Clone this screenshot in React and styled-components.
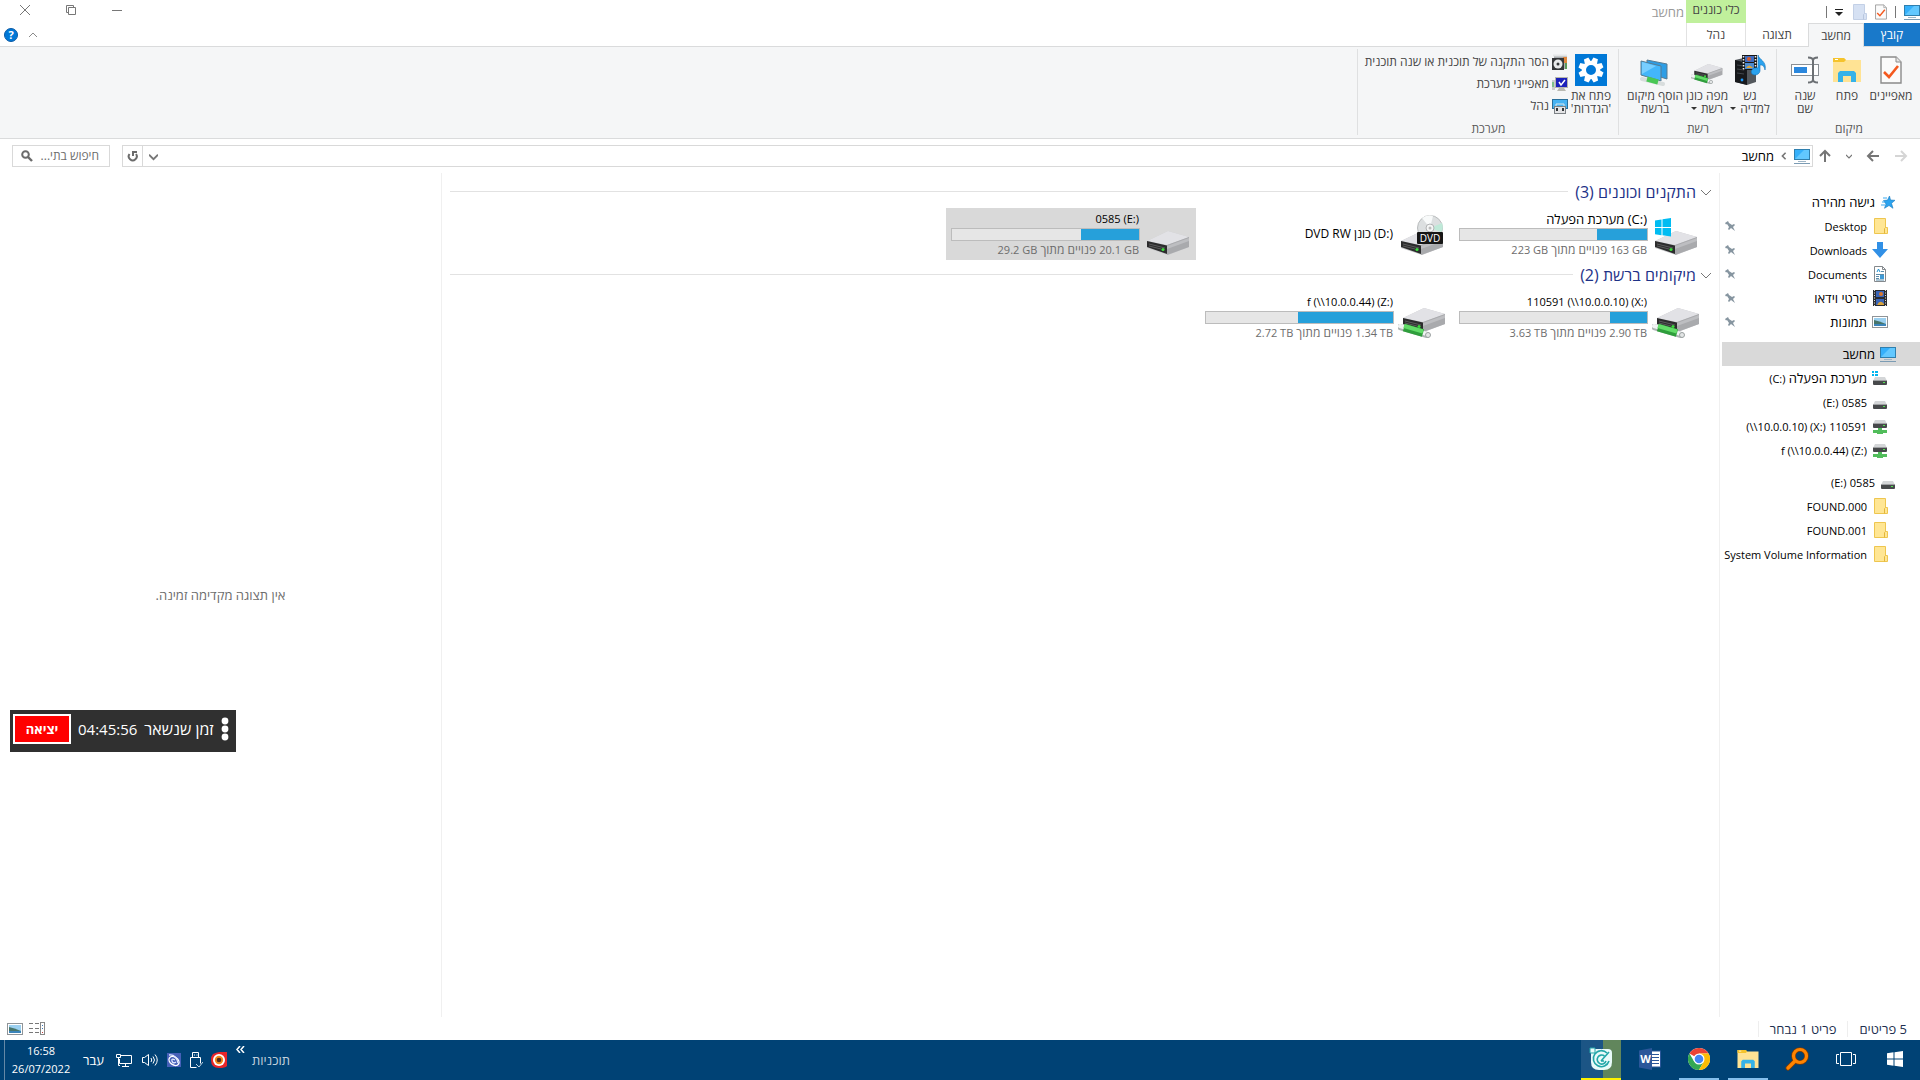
import * as React from "react";
import styled, { createGlobalStyle, css } from "styled-components";

const GlobalStyle = createGlobalStyle`
  * { box-sizing: border-box; }
  body { margin: 0; background: #fff; }
  body, button, input {
    font-family: "Open Sans", "Noto Sans", "Liberation Sans", sans-serif;
    font-size: 12px;
    line-height: 16px;
  }
  button {
    margin: 0;
    padding: 0;
    border: none;
    background: none;
    color: inherit;
  }
  ul { margin: 0; padding: 0; list-style: none; }
  svg { display: block; flex: none; }
`;

/* icons */

const MonitorIcon = ({ size = 16 }) =>
  <svg width={size} height={size} viewBox="0 0 16 16">
    <rect x="0.5" y="1.5" width="15" height="10" fill="#35b0fb" stroke="#2f7fae" />
    <path d="M1 11L10 2h5v9z" fill="#62c8ff" />
    <path d="M4 13.5h8" stroke="#9fb6c6" />
    <path d="M0 15.5h16" stroke="#7c9cb4" />
  </svg>;

const CheckPageIcon = ({ width = 12, height = 16 }) =>
  <svg width={width} height={height} viewBox="0 0 22 28">
    <path d="M1 1h15l5 5v21H1z" fill="#fbfbfb" stroke="#8b8b8b" strokeWidth="1.4" />
    <path d="M16 1v5h5" fill="#e6e6e6" stroke="#8b8b8b" />
    <path d="M4 16l5 5 9-11" fill="none" stroke="#f4591f" strokeWidth="2.6" />
  </svg>;

const PlainFolderIcon = ({ pale }) =>
  <svg width="16" height="18" viewBox="0 0 16 18">
    <path d="M2.5 1.5h11v9h2v6h-13z" fill={pale ? "#d6e1f3" : "#ffe694"} stroke={pale ? "#c3d0e6" : "#eec64f"} />
    <path d="M12.5 16.5v-5l1-1" fill="none" stroke={pale ? "#b8c6de" : "#e3b63c"} />
  </svg>;

const FolderIcon = ({ width = 28, height = 24 }) =>
  <svg width={width} height={height} viewBox="0 0 28 24">
    <path d="M0 0h11l2 2h15v22H0z" fill="#ffe394" />
    <path d="M0 0h11l2 2-2 2H0z" fill="#f5c32c" />
    <path d="M2 1.5h3" stroke="#fff" />
    <path d="M5 24v-9l2-2h14l2 2v9h-5v-6h-8v6z" fill="#35b2e8" />
  </svg>;

const RenameIcon = () =>
  <svg width="28" height="28" viewBox="0 0 28 28">
    <rect x="0.5" y="8.5" width="27" height="11" fill="#fff" stroke="#8a8f94" />
    <rect x="3" y="11" width="13" height="6" fill="#2b87dd" />
    <path d="M17 1.5c3 0 5 1 5 3v19c0 2-2 3-5 3M27 1.5c-3 0-5 1-5 3v19c0 2 2 3 5 3" fill="none" stroke="#6c7074" strokeWidth="2" />
  </svg>;

const MediaIcon = () =>
  <svg width="32" height="32" viewBox="0 0 32 32">
    <path d="M1 6l13-3 8 3v22l-9 3-12-3z" fill="#53585d" />
    <path d="M1 6l12 3v22L1 28z" fill="#17191c" />
    <path d="M3 11l7 1M3 15l7 1M3 19l7 1" stroke="#42474c" />
    <circle cx="8" cy="26" r="1.4" fill="#1c9bff" />
    <rect x="8" y="1" width="15" height="15" fill="#171717" />
    <path d="M9.5 2v14M21.5 2v14" stroke="#eee" strokeWidth="1.6" strokeDasharray="1.5 1.5" />
    <rect x="11" y="2" width="9" height="6" fill="#3e6bc0" />
    <rect x="11" y="9" width="9" height="6" fill="#4d8bd0" />
    <circle cx="15" cy="5" r="2" fill="#d35a2d" />
    <path d="M12 14q3-5 7 0z" fill="#e0a431" />
    <path d="M24 1c1 5 9 6 7 15-1-5-3-5-5-5v6a4.500 3.500 -20 1 1-2-3z" fill="#2aa2ee" stroke="#1274b8" strokeWidth="0.6" />
  </svg>;

const DriveShape = () =>
  <g>
    <path d="M2 14L23 4l21 6v10L23 28 2 21z" fill="#c7c8ca" />
    <path d="M2 14L23 4l21 6-22 8z" fill="#e2e2e6" />
    <path d="M22 18l22-8v10l-22 8z" fill="#a9aaad" />
    <path d="M22 19l22-8v3l-22 8z" fill="#bdbec1" />
    <path d="M2 14l20 4.5V27L2 20z" fill="#2c2c2d" />
    <path d="M4 17l16 4M4 19l12 3" stroke="#5b5b5c" />
    <circle cx="18" cy="22.5" r="1.6" fill="#3ddc3d" />
  </g>;

const PipeShape = () =>
  <g>
    <path d="M1 22l27 8" stroke="#aeb4b4" strokeWidth="6" strokeLinecap="round" />
    <path d="M1 21l27 8" stroke="#f0f3f3" strokeWidth="4" strokeLinecap="round" />
    <path d="M5 22.500l19 5.500" stroke="#2f9e3c" strokeWidth="8" />
    <path d="M5 21l19 5.500" stroke="#62dc68" strokeWidth="4" />
    <circle cx="29" cy="30" r="2.5" fill="#e3e6e6" stroke="#9ba1a1" />
  </g>;

const DriveIcon = ({ kind, size = 48 }) =>
  <svg width={size} height={size} viewBox="0 0 48 48">
    {kind === "network" &&
      <g transform="translate(3 11)">
        <DriveShape />
        <g transform="translate(-2 1)"><PipeShape /></g>
      </g>}
    {kind !== "network" && <g transform="translate(1 17)"><DriveShape /></g>}
    {kind === "system" &&
      <path d="M3 10.5l6.500-1V17H3zM10.500 9.300L19 8v9h-8.500zM3 18h6.500v7.300L3 24.300zM10.500 18H19v8.500l-8.500-1.200z" fill="#00bcf2" />}
    {kind === "dvd" &&
      <g transform="translate(2 4)">
        <circle cx="30" cy="14" r="12.500" fill="#dcdfe0" stroke="#b9bcbd" />
        <path d="M30 14L22 4q6-4 11-2z" fill="#f8fafa" />
        <path d="M30 14l12-5q2 6-1 9z" fill="#bfe9d8" />
        <circle cx="30" cy="14" r="4" fill="#f5f6f6" stroke="#b2b4b5" />
        <circle cx="30" cy="14" r="1.500" fill="#bbb" />
        <rect x="17" y="18" width="26" height="12" rx="1" fill="#161616" />
        <text x="30" y="28" textAnchor="middle" fontFamily="Open Sans" fontSize="10" fill="#fff">DVD</text>
      </g>}
  </svg>;

const MapDriveIcon = () =>
  <svg width="32" height="32" viewBox="0 2 48 46">
    <g transform="translate(3 12)">
      <DriveShape />
      <g transform="translate(-2 1)"><PipeShape /></g>
    </g>
  </svg>;

const AddNetworkIcon = () =>
  <svg width="32" height="32" viewBox="0 0 32 32">
    <path d="M8 6l20 4v15L8 19z" fill="#2d9de5" stroke="#587b91" />
    <path d="M2 7l20 5v15L2 21z" fill="#43b6fb" stroke="#587b91" />
    <path d="M3 8l14 4L3 20z" fill="#78ceff" />
    <path d="M3 25l21 5" stroke="#d8dddd" strokeWidth="4" strokeLinecap="round" />
    <path d="M8 25l11 3" stroke="#49c755" strokeWidth="5" />
  </svg>;

const SettingsIcon = () =>
  <svg width="32" height="32" viewBox="0 0 32 32">
    <rect width="32" height="32" fill="#0078d7" />
    {[0, 45, 90, 135, 180, 225, 270, 315].map(angle =>
      <path key={angle} d="M13.600 3.500h4.800l1 5.500h-6.800z" fill="#fff" transform={`rotate(${angle + 22} 16 16)`} />
    )}
    <circle cx="16" cy="16" r="7" fill="none" stroke="#fff" strokeWidth="4" />
  </svg>;

const UninstallIcon = () =>
  <svg width="16" height="16" viewBox="0 0 16 16">
    <path d="M2 1h13v14H2z" fill="#a9adb0" />
    <path d="M1 1.500h14" stroke="#e4e6e7" strokeWidth="2" />
    <path d="M11 3h4v6h-4z" fill="#e0863c" />
    <path d="M13 9h2v6h-2z" fill="#5b9a57" />
    <rect x="0" y="4" width="12" height="12" fill="#343638" />
    <circle cx="6" cy="10" r="4.500" fill="#e8eaea" />
    <circle cx="6" cy="10" r="1.500" fill="#343638" />
  </svg>;

const SystemIcon = () =>
  <svg width="16" height="16" viewBox="0 0 16 16">
    <rect x="0" y="4" width="3" height="10" fill="#c9cccd" />
    <path d="M1 6v5" stroke="#39b54a" />
    <rect x="3.500" y="1.500" width="12" height="10" fill="#1c21bb" stroke="#b6b6ae" />
    <path d="M7 6l2 3 4-5" fill="none" stroke="#fff" strokeWidth="1.500" />
    <path d="M7 12h5l2 3H5z" fill="#b9b9b2" />
  </svg>;

const ManageIcon = () =>
  <svg width="16" height="16" viewBox="0 0 16 16">
    <rect x="0.500" y="1.500" width="15" height="9" fill="#47b3f3" stroke="#2a6f9b" />
    <path d="M4 8V6h8v2" fill="none" stroke="#dfe7ea" />
    <rect x="2.500" y="8.500" width="11" height="7" fill="#e4e4e6" stroke="#7d8286" />
    <path d="M5 10v3M11 10v3" stroke="#33373a" strokeWidth="2" />
  </svg>;

const StarIcon = () =>
  <svg width="16" height="16" viewBox="0 0 16 16">
    <path d="M9.500 2l1 4 4.500.3-3.500 3 1.500 5-4-2.800-4.500 2.800L6 10 3.500 6.500l4-.4z" fill="#2ba3ef" stroke="#1579bf" strokeWidth="0.600" />
    <path d="M3 4h4M2 8h3M1 11h4" stroke="#3aa9ef" />
  </svg>;

const DownloadIcon = () =>
  <svg width="16" height="16" viewBox="0 0 16 16">
    <path d="M5 0h6v7h5l-8 9-8-9h5z" fill="#3190e6" />
  </svg>;

const DocumentIcon = () =>
  <svg width="16" height="16" viewBox="0 0 16 16">
    <path d="M2.500 0.500h8l3 3v12h-11z" fill="#fff" stroke="#84898d" />
    <path d="M10.500 0.500v3h3" fill="none" stroke="#84898d" />
    <path d="M5 6l1.500-3L8 6" fill="none" stroke="#1e8fd0" />
    <path d="M9 5.500h3M4 8.500h8M4 12.500h3M4 10.500h3M4 14h8" stroke="#5b8caa" />
    <rect x="8" y="9" width="4" height="4" fill="#3f9bd6" />
  </svg>;

const FilmIcon = () =>
  <svg width="16" height="16" viewBox="0 0 16 16">
    <rect x="1" y="0" width="14" height="16" fill="#2b2c2f" />
    <path d="M2.500 0v16M13.500 0v16" stroke="#ddd" strokeDasharray="1 1.500" />
    <rect x="4" y="1" width="8" height="6" fill="#3a65b8" />
    <rect x="4" y="9" width="8" height="6" fill="#3a65b8" />
    <circle cx="9" cy="4" r="2" fill="#d9782e" />
    <path d="M5 15q3-6 7-1v1z" fill="#d8a23a" />
  </svg>;

const PictureIcon = () =>
  <svg width="16" height="16" viewBox="0 0 16 16">
    <rect x="0.500" y="2.500" width="15" height="11" fill="#fff" stroke="#8f9498" />
    <rect x="2" y="4" width="12" height="8" fill="#9bd0f0" />
    <path d="M2 6q5 1 12 4v2H2z" fill="#47756b" />
    <path d="M2 10h12v2H2z" fill="#3b84ba" />
  </svg>;

const SmallDriveIcon = ({ kind }) =>
  <svg width="16" height="16" viewBox="0 0 16 16">
    <g transform={kind === "network" ? "translate(0 -4)" : "translate(0 1)"}>
      <path d="M3 6h10l2 4H1z" fill="#d4d6d8" />
      <rect x="1" y="9" width="14" height="5" rx="1" fill="#47494b" />
      <path d="M1 9.500h14" stroke="#9fa1a3" />
      <rect x="11" y="11" width="2" height="1" fill="#52e352" />
    </g>
    {kind === "network" && <path d="M6 10h4v2h5v3h-4v1H5v-1H1v-3h5z" fill="#51bd5b" />}
    {kind === "system" && <path d="M0 1h2v2H0zM3 1h3v2H3zM0 4h2v2H0zM3 4h3v2H3z" fill="#00b4ee" />}
  </svg>;

const PinIcon = () =>
  <svg width="12" height="12" viewBox="0 0 12 12">
    <path d="M1 3l3-2 1 2 3 2 2-1 1 1-2 2 2 4-4-3-2 2-1-1 1-2-2-3-1 .500z" fill="#8695a0" />
  </svg>;

const Chevron = ({ points, size = 10, width = 1, color = "#767676" }) =>
  <svg width={size} height={size} viewBox="0 0 10 10">
    <polyline points={points} fill="none" stroke={color} strokeWidth={width} />
  </svg>;

const DOWN = "0,3 5,8 10,3";

const ArrowIcon = ({ rotate = 0, color = "#757575" }) =>
  <svg width="14" height="14" viewBox="0 0 14 14">
    <path d="M13 7H2M7 2L2 7l5 5" fill="none" stroke={color} strokeWidth="2" transform={`rotate(${rotate} 7 7)`} />
  </svg>;

const RefreshIcon = () =>
  <svg width="12" height="12" viewBox="0 0 12 12">
    <path d="M2.500 4a4 4 0 1 0 6.500 0" fill="none" stroke="#6b6b6b" strokeWidth="2" />
    <path d="M6 6V2h4" fill="none" stroke="#6b6b6b" strokeWidth="2" />
  </svg>;

const SearchIcon = () =>
  <svg width="12" height="12" viewBox="0 0 12 12">
    <circle cx="4.500" cy="4.500" r="3.300" fill="none" stroke="#6b6b6b" strokeWidth="2" />
    <path d="M7 7l4 4" stroke="#6b6b6b" strokeWidth="2.400" />
  </svg>;

const HelpIcon = () =>
  <svg width="14" height="14" viewBox="0 0 14 14">
    <circle cx="7" cy="7" r="6.500" fill="#0078d7" stroke="#0b5aa5" />
    <text x="7" y="11" textAnchor="middle" fontFamily="Open Sans" fontSize="11" fontWeight="700" fill="#fff">?</text>
  </svg>;

const WindowsIcon = () =>
  <svg width="16" height="16" viewBox="0 0 16 16">
    <path d="M0 2.200L6.500 1.300V7.500H0zM7.500 1.200L16 0v7.500H7.500zM0 8.500h6.500v6.200L0 13.800zM7.500 8.500H16V16l-8.500-1.200z" fill="#fff" />
  </svg>;

const TaskViewIcon = () =>
  <svg width="20" height="14" viewBox="0 0 20 14">
    <path d="M4.500 0.500h11v13h-11zM3 2.500H0.500v9H3M17 2.500h2.500v9H17" fill="none" stroke="#fff" />
  </svg>;

const MagnifierIcon = () =>
  <svg width="24" height="24" viewBox="0 0 24 24">
    <path d="M10 14l-7 7" stroke="#7a3a06" strokeWidth="5" strokeLinecap="round" />
    <circle cx="15" cy="9" r="6.500" fill="none" stroke="#7a3a06" strokeWidth="4.600" />
    <path d="M10 14l-7 7" stroke="#ff8400" strokeWidth="3.400" strokeLinecap="round" />
    <circle cx="15" cy="9" r="6.500" fill="none" stroke="#ff8400" strokeWidth="3.200" />
  </svg>;

const ChromeIcon = () =>
  <svg width="22" height="22" viewBox="0 0 22 22">
    <circle cx="11" cy="11" r="11" fill="#fff" />
    <path d="M11 11L1.470 5.500A11 11 0 0 1 20.530 5.500H11z" fill="#ea4335" />
    <path d="M1.470 5.500A11 11 0 0 0 11 22l4.760-8.250L11 11 6.240 13.750z" fill="#34a853" />
    <path d="M20.530 5.500A11 11 0 0 1 11 22l4.760-8.250L11 5.500z" fill="#fbbc05" />
    <circle cx="11" cy="11" r="5.500" fill="#fff" />
    <circle cx="11" cy="11" r="4.300" fill="#4285f4" />
  </svg>;

const WordIcon = () =>
  <svg width="22" height="22" viewBox="0 0 22 22">
    <rect x="11" y="3" width="10.500" height="16" fill="#fff" stroke="#2b579a" />
    <path d="M13 6.500h7M13 9.500h7M13 12.500h7M13 15.500h7" stroke="#2b579a" />
    <path d="M0 2.500L13 0v22L0 19.500z" fill="#2b579a" />
    <text x="6.500" y="15" textAnchor="middle" fontFamily="Open Sans" fontSize="11" fontWeight="700" fill="#fff">W</text>
  </svg>;

const TimerAppIcon = () =>
  <svg width="24" height="24" viewBox="0 0 24 24">
    <path d="M2 2h17q4 0 4 4v9q0 8-8 8H10q-8 0-8-8z" fill="#e9fafa" />
    <path d="M18 6A8 8 0 1 0 20 14M15.500 9A4.500 4.500 0 1 0 17 14" fill="none" stroke="#22a6a8" strokeWidth="1.600" />
    <path d="M12 14l8-9M12 14h3" stroke="#22a6a8" strokeWidth="1.600" />
    <path d="M1 1h5v5H1z" fill="#e9fafa" stroke="#22a6a8" />
  </svg>;

const AntivirusIcon = () =>
  <svg width="16" height="16" viewBox="0 0 16 16">
    <path d="M2 2q6-3 14-2v14q-2 2-8 2-8 0-8-8 0-4 2-6z" fill="#e8262a" />
    <circle cx="8" cy="8" r="6" fill="#fff" />
    <circle cx="8" cy="8" r="4.200" fill="#f08a1d" />
    <circle cx="8" cy="8" r="2.300" fill="#5a2a1a" />
  </svg>;

const UsbIcon = () =>
  <svg width="14" height="18" viewBox="0 0 14 18">
    <path d="M3.500 6.500v-5h6v5M1.500 6.500h10v6M1.500 6.500v10h6M5 4h1M7.500 4h1" fill="none" stroke="#fff" />
    <path d="M7 13l3 3 4-5" fill="none" stroke="#c2d5e4" />
  </svg>;

const SwirlIcon = () =>
  <svg width="14" height="14" viewBox="0 0 14 14">
    <rect width="14" height="14" fill="#4560b8" />
    <ellipse cx="7" cy="8" rx="5.500" ry="3.800" fill="none" stroke="#fff" strokeWidth="1.400" transform="rotate(35 7 8)" />
    <path d="M2 2q7-1 9 8M9 9q-3 2-4-1t3-1" fill="none" stroke="#dfe8ff" strokeWidth="1.300" />
  </svg>;

const SpeakerIcon = () =>
  <svg width="18" height="14" viewBox="0 0 18 14">
    <path d="M1.500 4.500h2l4-3v11l-4-3h-2z" fill="none" stroke="#fff" />
    <path d="M10 5q1.500 2 0 4M12 3.500q3 3.500 0 7M14 1.500q4.500 5.500 0 11" fill="none" stroke="#fff" />
  </svg>;

const NetworkIcon = () =>
  <svg width="18" height="14" viewBox="0 0 18 14">
    <path d="M6 2.500h10.500v8h-12V6M7 13.500h7M10.500 10v3" fill="none" stroke="#fff" />
    <path d="M1.500 1.500h4v3h-4zM3.500 5v7.500H5" fill="none" stroke="#fff" />
  </svg>;

const DetailsViewIcon = () =>
  <svg width="16" height="13" viewBox="0 0 16 13">
    <path d="M0 1.500h4M6 1.500h4M0 6.500h4M6 6.500h4M0 10.500h4M6 10.500h4" stroke="#777" />
    <rect x="11.500" y="0.500" width="4" height="12" fill="none" stroke="#888" />
    <path d="M13 3.500h1M13 6.500h1" stroke="#3c78b8" />
    <path d="M13 10.500h1" stroke="#c23b3b" />
  </svg>;

/* data */

const quickAccess = [
  { latin: "Desktop", icon: <PlainFolderIcon /> },
  { latin: "Downloads", icon: <DownloadIcon /> },
  { latin: "Documents", icon: <DocumentIcon /> },
  { name: "סרטי וידאו", icon: <FilmIcon /> },
  { name: "תמונות", icon: <PictureIcon /> }
];

const treeGroups = [
  [
    { name: "גישה מהירה", icon: <StarIcon />, root: true },
    ...quickAccess.map(item => ({ ...item, pinned: true }))
  ],
  [
    { name: "מחשב", icon: <MonitorIcon />, root: true, selected: true },
    { name: "מערכת הפעלה", drive: "(C:)", icon: <SmallDriveIcon kind="system" /> },
    { latin: "0585", drive: "(E:)", icon: <SmallDriveIcon /> },
    { latin: "110591", drive: "(\\\\10.0.0.10) (X:)", icon: <SmallDriveIcon kind="network" /> },
    { latin: "f (\\\\10.0.0.44) (Z:)", icon: <SmallDriveIcon kind="network" /> }
  ],
  [
    { latin: "0585", drive: "(E:)", icon: <SmallDriveIcon />, root: true },
    { latin: "FOUND.000", icon: <PlainFolderIcon /> },
    { latin: "FOUND.001", icon: <PlainFolderIcon /> },
    { latin: "System Volume Information", icon: <PlainFolderIcon /> }
  ]
];

const sections = [
  {
    title: "התקנים וכוננים (3)",
    drives: [
      { name: "מערכת הפעלה (C:)", fontSize: 13, kind: "system", free: "163 GB", total: "223 GB", used: 27 },
      { name: "DVD RW כונן (D:)", fontSize: 12, kind: "dvd" },
      { name: "0585 (E:)", free: "20.1 GB", total: "29.2 GB", used: 31, selected: true }
    ]
  },
  {
    title: "מיקומים ברשת (2)",
    drives: [
      { name: "110591 (\\\\10.0.0.10) (X:)", kind: "network", free: "2.90 TB", total: "3.63 TB", used: 20 },
      { name: "f (\\\\10.0.0.44) (Z:)", kind: "network", free: "1.34 TB", total: "2.72 TB", used: 51 }
    ]
  }
];

/* parts */

const LargeButton = ({ icon, lines, menu, width }) =>
  <LargeCommand $width={width}>
    <LargeIcon>{icon}</LargeIcon>
    {lines.map((line, i) =>
      <CommandLine key={line}>
        {line}
        {menu && i === lines.length - 1 && <Caret />}
      </CommandLine>
    )}
  </LargeCommand>;

const TreeItem = ({ name, latin, drive, icon, root, pinned, selected }) =>
  <li>
    <TreeButton $root={root} $selected={selected}>
      {icon}
      <TreeLabel>
        {name}
        {latin && <Latin dir="ltr">{latin}</Latin>}
        {drive && " "}
        {drive && <Latin dir="ltr">{drive}</Latin>}
      </TreeLabel>
      {pinned && <PinIcon />}
    </TreeButton>
  </li>;

const Drive = ({ name, fontSize = 11, kind, free, total, used, selected }) =>
  <Tile $selected={selected}>
    <DriveIcon kind={kind} />
    <TileBody>
      <TileName dir="ltr" $size={fontSize}>{name}</TileName>
      {free &&
        <>
          <Usage><UsageFill style={{ width: `${used}%` }} /></Usage>
          <TileInfo>
            <Latin dir="ltr">{free}</Latin> פנויים מתוך <Latin dir="ltr">{total}</Latin>
          </TileInfo>
        </>}
    </TileBody>
  </Tile>;

const TitleBar = () =>
  <Title>
    <QuickBar>
      <MonitorIcon />
      <QuickDivider />
      <button aria-label="מאפיינים"><CheckPageIcon /></button>
      <button aria-label="תיקיה חדשה"><PlainFolderIcon pale /></button>
      <button aria-label="התאמה אישית">
        <svg width="8" height="8" viewBox="0 0 8 8">
          <path d="M0 1.500h8" stroke="#222" />
          <path d="M0 4h8L4 8z" fill="#222" />
        </svg>
      </button>
      <QuickDivider />
    </QuickBar>
    <ContextTitle>כלי כוננים</ContextTitle>
    <WindowTitle>מחשב</WindowTitle>
    <WindowButtons>
      <WindowButton aria-label="מזער">
        <svg width="10" height="10"><path d="M0 5.500h10" stroke="#777" /></svg>
      </WindowButton>
      <WindowButton aria-label="שחזר">
        <svg width="10" height="10">
          <path d="M2.500 2.500h7v7h-7zM2 7.500H0.500v-7h7V2" fill="none" stroke="#777" />
        </svg>
      </WindowButton>
      <WindowButton aria-label="סגור">
        <svg width="10" height="10"><path d="M0 0l10 10M10 0L0 10" stroke="#777" /></svg>
      </WindowButton>
    </WindowButtons>
  </Title>;

const Ribbon = () =>
  <RibbonBar>
    <Group>
      <GroupItems>
        <LargeButton icon={<CheckPageIcon width={22} height={28} />} lines={["מאפיינים"]} width={46} />
        <LargeButton icon={<FolderIcon />} lines={["פתח"]} width={42} />
        <LargeButton icon={<RenameIcon />} lines={["שנה", "שם"]} width={42} />
      </GroupItems>
      <GroupName>מיקום</GroupName>
    </Group>
    <Group>
      <GroupItems>
        <LargeButton icon={<MediaIcon />} lines={["גש", "למדיה"]} menu width={40} />
        <LargeButton icon={<MapDriveIcon />} lines={["מפה כונן", "רשת"]} menu width={46} />
        <LargeButton icon={<AddNetworkIcon />} lines={["הוסף מיקום", "ברשת"]} width={58} />
      </GroupItems>
      <GroupName>רשת</GroupName>
    </Group>
    <Group>
      <GroupItems>
        <LargeButton icon={<SettingsIcon />} lines={["פתח את", "'הגדרות'"]} width={42} />
        <SmallCommands>
          <SmallCommand><UninstallIcon />הסר התקנה של תוכנית או שנה תוכנית</SmallCommand>
          <SmallCommand><SystemIcon />מאפייני מערכת</SmallCommand>
          <SmallCommand><ManageIcon />נהל</SmallCommand>
        </SmallCommands>
      </GroupItems>
      <GroupName>מערכת</GroupName>
    </Group>
  </RibbonBar>;

const AddressBar = () =>
  <AddressRow>
    <NavButtons>
      <button aria-label="קדימה"><ArrowIcon color="#d5d5d5" rotate={180} /></button>
      <button aria-label="אחורה"><ArrowIcon rotate={0} /></button>
      <button aria-label="היסטוריה"><Chevron points={DOWN} size={6} width={2} /></button>
      <button aria-label="למעלה"><ArrowIcon rotate={90} /></button>
    </NavButtons>
    <PathBox>
      <Path>
        <MonitorIcon />
        <Chevron points="7,1 3,5 7,9" size={8} width={2} />
        <span>מחשב</span>
      </Path>
      <PathButton aria-label="מיקומים קודמים"><Chevron points={DOWN} size={9} width={2} /></PathButton>
      <PathButton $divided aria-label="רענן"><RefreshIcon /></PathButton>
    </PathBox>
    <SearchBox>
      <SearchInput type="text" aria-label="חיפוש" placeholder="חיפוש בתי..." />
      <SearchIcon />
    </SearchBox>
  </AddressRow>;

const Taskbar = () =>
  <TaskbarRow>
    <TaskButtons>
      <TaskButton aria-label="התחל"><WindowsIcon /></TaskButton>
      <TaskButton aria-label="תצוגת משימות"><TaskViewIcon /></TaskButton>
      <TaskButton aria-label="Everything"><MagnifierIcon /></TaskButton>
      <TaskButton $line="#85bfec" aria-label="סייר הקבצים"><FolderIcon width={22} height={18} /></TaskButton>
      <TaskButton $line="#85bfec" aria-label="Chrome"><ChromeIcon /></TaskButton>
      <TaskButton aria-label="Word"><WordIcon /></TaskButton>
      <TaskButton $line="#fff200" $active aria-label="זמן"><TimerAppIcon /></TaskButton>
    </TaskButtons>
    <Programs>תוכניות</Programs>
    <More aria-label="עוד">
      <svg width="9" height="7"><path d="M4 0L1 3.500 4 7M8 0L5 3.500 8 7" fill="none" stroke="#fff" strokeWidth="1.500" /></svg>
    </More>
    <Tray>
      <AntivirusIcon />
      <UsbIcon />
      <SwirlIcon />
      <SpeakerIcon />
      <NetworkIcon />
    </Tray>
    <Language>עבר</Language>
    <Clock dir="ltr">
      <span>16:58</span>
      <span>26/07/2022</span>
    </Clock>
  </TaskbarRow>;

export default function App() {
  return (
    <Desktop dir="rtl" lang="he">
      <GlobalStyle />
      <TitleBar />
      <Tabs>
        <FileTab>קובץ</FileTab>
        <Tab $width={56} $current>מחשב</Tab>
        <Tab $width={62}>תצוגה</Tab>
        <Tab $width={60} $context>נהל</Tab>
        <TabTools>
          <button aria-label="כווץ"><Chevron points="1,7 5,3 9,7" color="#8a8a8a" /></button>
          <button aria-label="עזרה"><HelpIcon /></button>
        </TabTools>
      </Tabs>
      <Ribbon />
      <AddressBar />
      <Main>
        <Tree>
          {treeGroups.map((items, i) =>
            <TreeGroup key={i}>
              {items.map((item, j) => <TreeItem key={j} {...item} />)}
            </TreeGroup>
          )}
        </Tree>
        <Files>
          {sections.map(section =>
            <section key={section.title}>
              <SectionTitle>
                <Chevron points="0,3 5,8 10,3" />
                {section.title}
              </SectionTitle>
              <Tiles>
                {section.drives.map(drive => <Drive key={drive.name} {...drive} />)}
              </Tiles>
            </section>
          )}
        </Files>
        <Preview>אין תצוגה מקדימה זמינה.</Preview>
      </Main>
      <Status>
        <StatusText>5 פריטים</StatusText>
        <StatusText>פריט 1 נבחר</StatusText>
        <ViewButtons>
          <button aria-label="פרטים"><DetailsViewIcon /></button>
          <button aria-label="סמלים גדולים"><PictureIcon /></button>
        </ViewButtons>
      </Status>
      <Taskbar />
      <Countdown>
        <svg width="8" height="24" viewBox="0 0 8 24">
          <g fill="#fff"><circle cx="4" cy="4" r="3.400" /><circle cx="4" cy="12" r="3.400" /><circle cx="4" cy="20" r="3.400" /></g>
        </svg>
        <span>זמן שנשאר</span>
        <Remaining>04:45:56</Remaining>
        <ExitButton>יציאה</ExitButton>
      </Countdown>
    </Desktop>
  );
}

const Desktop = styled.div`
  position: relative;
  min-height: 100vh;
  display: flex;
  flex-direction: column;
  color: #000;
`;

const Latin = styled.bdi`
  font-size: 11px;
`;

const Title = styled.header`
  display: flex;
  height: 23px;
`;

const QuickBar = styled.div`
  width: 174px;
  display: flex;
  align-items: center;
  gap: 8px;
`;

const QuickDivider = styled.span`
  width: 1px;
  height: 12px;
  background: #777;
`;

const ContextTitle = styled.div`
  width: 60px;
  background: #c0f09c;
  color: #444;
  text-align: center;
  line-height: 20px;
`;

const WindowTitle = styled.div`
  flex: 1;
  padding: 0 2px;
  color: #999;
  font-size: 13px;
  line-height: 24px;
`;

const WindowButtons = styled.div`
  display: flex;
  padding-left: 2px;
`;

const WindowButton = styled.button`
  width: 46px;
  height: 20px;
  display: flex;
  align-items: center;
  justify-content: center;
`;

const Tabs = styled.nav`
  display: flex;
  height: 24px;
  border-bottom: 1px solid #dadbdc;
`;

const FileTab = styled.button`
  width: 56px;
  background: #1979ca;
  color: #fff;
`;

const Tab = styled.button`
  width: ${props => props.$width}px;
  color: #444;

  ${props => props.$current && css`
    height: 24px;
    background: #f5f6f7;
    border: 1px solid #dadbdc;
    border-bottom: none;
  `}

  ${props => props.$context && css`
    border: solid #e2e2e2;
    border-width: 0 1px;
  `}
`;

const TabTools = styled.div`
  display: flex;
  align-items: center;
  gap: 10px;
  margin-right: auto;
  padding-left: 4px;
`;

const RibbonBar = styled.div`
  display: flex;
  height: 92px;
  background: #f5f6f7;
  border-bottom: 1px solid #dadbdc;
  color: #444;
`;

const Group = styled.div`
  display: flex;
  flex-direction: column;
  justify-content: space-between;
  margin: 2px 0 3px;
  padding: 2px 6px 0 7px;
  border-left: 1px solid #dfe0e1;
`;

const GroupItems = styled.div`
  display: flex;
`;

const GroupName = styled.div`
  color: #5a5a5a;
  line-height: 13px;
  text-align: center;
`;

const LargeCommand = styled.button`
  width: ${props => props.$width}px;
  display: flex;
  flex-direction: column;
  align-items: center;
  padding-top: 2px;
  white-space: nowrap;
`;

const LargeIcon = styled.span`
  height: 34px;
  display: flex;
  align-items: center;
  margin-bottom: 2px;
`;

const CommandLine = styled.span`
  display: flex;
  align-items: center;
  gap: 4px;
  line-height: 13px;
`;

const Caret = styled.span`
  border: solid transparent;
  border-width: 3px 3px 0;
  border-top-color: #333;
`;

const SmallCommands = styled.div`
  display: flex;
  flex-direction: column;
  padding-right: 2px;
`;

const SmallCommand = styled.button`
  display: flex;
  align-items: center;
  gap: 3px;
  height: 22px;
  white-space: nowrap;
`;

const AddressRow = styled.div`
  display: flex;
  align-items: center;
  height: 34px;
  padding: 0 12px;
`;

const NavButtons = styled.div`
  display: flex;
  align-items: center;
  gap: 14px;
  margin-left: 5px;
`;

const PathBox = styled.div`
  flex: 1;
  display: flex;
  align-items: center;
  height: 22px;
  padding-right: 2px;
  border: 1px solid #d9d9d9;
`;

const Path = styled.div`
  flex: 1;
  display: flex;
  align-items: center;
  gap: 6px;
  font-size: 13px;
`;

const PathButton = styled.button`
  width: 20px;
  height: 20px;
  display: flex;
  align-items: center;
  justify-content: center;
  ${props => props.$divided && css`border-right: 1px solid #d9d9d9;`}
`;

const SearchBox = styled.label`
  width: 98px;
  height: 22px;
  display: flex;
  align-items: center;
  gap: 4px;
  margin-right: 12px;
  padding: 0 10px 0 8px;
  border: 1px solid #d9d9d9;
`;

const SearchInput = styled.input`
  flex: 1;
  min-width: 0;
  padding: 0;
  border: none;
  outline: none;
  background: none;
  &::placeholder { color: #6d6d6d; }
`;

const Main = styled.main`
  flex: 1;
  display: flex;
`;

const Tree = styled.nav`
  width: 201px;
  padding: 17px 0 0 2px;
  border-left: 1px solid #f0f0f0;
`;

const TreeGroup = styled.ul`
  margin-bottom: 8px;
`;

const TreeButton = styled.button`
  width: 100%;
  height: 24px;
  display: flex;
  align-items: center;
  gap: 5px;
  padding: 0 ${props => props.$root ? 24 : 32}px 0 2px;
  background: ${props => props.$selected ? "#d9d9d9" : "none"};
  font-size: 13px;
`;

const TreeLabel = styled.span`
  flex: 1;
  min-width: 0;
  text-align: right;
  white-space: nowrap;
`;

const Files = styled.div`
  flex: 1;
  padding: 7px 8px 0;
`;

const SectionTitle = styled.h2`
  display: flex;
  align-items: center;
  gap: 5px;
  height: 23px;
  margin: 0 0 5px;
  color: #1e3287;
  font-size: 16px;
  font-weight: 400;

  &::after {
    content: "";
    flex: 1;
    height: 1px;
    margin-right: 2px;
    background: #e2e2e2;
  }
`;

const Tiles = styled.div`
  display: flex;
  flex-wrap: wrap;
  gap: 4px;
  margin-bottom: 3px;
  padding-right: 7px;
`;

const Tile = styled.div`
  width: 250px;
  height: 52px;
  display: flex;
  align-items: center;
  gap: 4px;
  padding: 0 4px 0 5px;
  background: ${props => props.$selected ? "#d9d9d9" : "none"};
`;

const TileBody = styled.div`
  flex: 1;
`;

const TileName = styled.div`
  padding-right: 1px;
  font-size: ${props => props.$size}px;
  text-align: right;
`;

const Usage = styled.div`
  height: 13px;
  margin: 1px 0;
  background: #e6e6e6;
  border: 1px solid #bcbcbc;
`;

const UsageFill = styled.div`
  height: 100%;
  background: #26a0da;
`;

const TileInfo = styled.div`
  padding-right: 1px;
  color: #6d6d6d;
`;

const Preview = styled.aside`
  width: 442px;
  display: flex;
  align-items: center;
  justify-content: center;
  border-right: 1px solid #f0f0f0;
  color: #6d6d6d;
  font-size: 13px;
`;

const Status = styled.footer`
  display: flex;
  align-items: center;
  height: 23px;
  padding: 0 2px 0 7px;
  color: #1e3050;
  font-size: 13px;
`;

const StatusText = styled.span`
  padding: 0 11px;
  border-left: 1px solid #eee;
`;

const ViewButtons = styled.div`
  display: flex;
  align-items: center;
  gap: 6px;
  margin-right: auto;
`;

const TaskbarRow = styled.div`
  display: flex;
  align-items: center;
  height: 40px;
  padding: 0 5px 0 4px;
  background: #004275;
  color: #fff;
  font-size: 13px;
`;

const TaskButtons = styled.div`
  flex: 1;
  display: flex;
  gap: 9px;
`;

const TaskButton = styled.button`
  width: 40px;
  height: 40px;
  display: flex;
  align-items: center;
  justify-content: center;
  border-bottom: 2px solid ${props => props.$line || "transparent"};
  ${props => props.$active && css`
    background: linear-gradient(to right, #1c5585 55%, #61865c 55%);
  `}
`;

const Programs = styled.span`
  color: #c2d0dc;
`;

const More = styled.button`
  align-self: flex-start;
  margin: 6px 7px 0 9px;
`;

const Tray = styled.div`
  display: flex;
  align-items: center;
  gap: 8px;
`;

const Language = styled.span`
  margin: 0 11px 0 6px;
`;

const Clock = styled.time`
  align-self: stretch;
  width: 73px;
  display: flex;
  flex-direction: column;
  justify-content: center;
  align-items: center;
  font-size: 11px;
  line-height: 18px;
  border-left: 1px solid #6488a6;
`;

/* floats over the file window */
const Countdown = styled.div`
  position: absolute;
  left: 10px;
  bottom: 328px;
  height: 42px;
  display: flex;
  align-items: center;
  gap: 7px;
  padding: 0 7px 4px 3px;
  background: #303030;
  color: #fff;
  font-size: 16px;
`;

const Remaining = styled.time`
  font-size: 15px;
`;

const ExitButton = styled.button`
  width: 58px;
  height: 30px;
  background: #f00;
  border: 2px solid #fff;
  color: #fff;
  font-size: 13px;
  font-weight: 700;
`;
